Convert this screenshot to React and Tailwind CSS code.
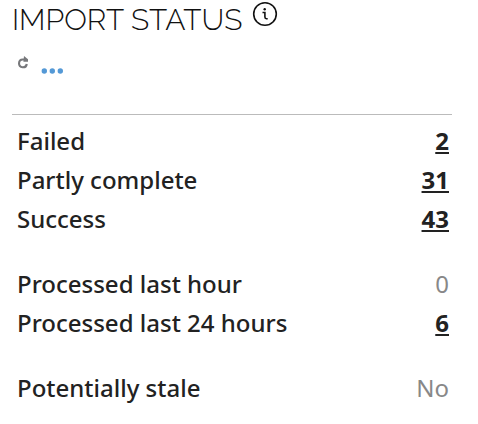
const groups = [
  [
    { label: "Failed", value: "2", link: true },
    { label: "Partly complete", value: "31", link: true },
    { label: "Success", value: "43", link: true },
  ],
  [
    { label: "Processed last hour", value: "0" },
    { label: "Processed last 24 hours", value: "6", link: true },
  ],
  [{ label: "Potentially stale", value: "No" }],
];

function InfoIcon() {
  return (
    <svg width="26" height="26" viewBox="0 0 26 26" fill="none" aria-hidden="true">
      <circle cx="13" cy="13" r="11.3" stroke="#111" strokeWidth="1.6" />
      <circle cx="12.7" cy="8.2" r="1.2" fill="#111" />
      <path d="M10.5 11.5h2.4v4.6q0 1.6 1.4 1.6h1.4" stroke="#111" strokeWidth="1.6" />
    </svg>
  );
}

function RefreshIcon() {
  return (
    <svg width="12" height="13" viewBox="0 0 12 13" fill="none" aria-hidden="true">
      <path d="M7.8 3.5H5.8A3.9 3.9 0 1 0 9.8 8" stroke="#77787b" strokeWidth="2.1" />
      <path d="M7 0L11 3.2V5.8H6.4z" fill="#77787b" />
    </svg>
  );
}

export default function App() {
  return (
    <main className="bg-white pl-3 pr-[26px] font-['Noto_Sans','Open_Sans',sans-serif] text-[#222]">
      <header className="flex items-start gap-2.5">
        <h1 className="font-[Raleway,Lato,sans-serif] text-[30px] font-light leading-[40px] text-[#111]">
          IMPORT STATUS
        </h1>
        <button type="button" aria-label="About import status" className="mt-px">
          <InfoIcon />
        </button>
      </header>
      <div className="flex h-[75px] items-start gap-3 border-b border-[#bbb] pl-[5px] pt-4">
        <button type="button" aria-label="Refresh">
          <RefreshIcon />
        </button>
        <button type="button" aria-label="More options" className="pt-3">
          <svg width="24" height="6" viewBox="0 0 24 6" fill="#5499d6" aria-hidden="true">
            <circle cx="3.3" cy="3" r="2.7" />
            <circle cx="11.3" cy="3" r="2.7" />
            <circle cx="19.3" cy="3" r="2.7" />
          </svg>
        </button>
      </div>
      <table className="w-full text-2xl leading-[39px]">
        {groups.map((rows, i) => (
          <tbody key={i} className="before:block before:h-[26px] first:before:h-1.5">
            {rows.map((row) => (
              <tr key={row.label}>
                <th scope="row" className="p-0 pl-[5px] text-left font-medium">
                  {row.label}
                </th>
                <td className="p-0 pr-[3px] text-right">
                  {row.link ? (
                    <a href="#" className="font-bold underline">
                      {row.value}
                    </a>
                  ) : (
                    <span className="text-[#888]">{row.value}</span>
                  )}
                </td>
              </tr>
            ))}
          </tbody>
        ))}
      </table>
    </main>
  );
}
